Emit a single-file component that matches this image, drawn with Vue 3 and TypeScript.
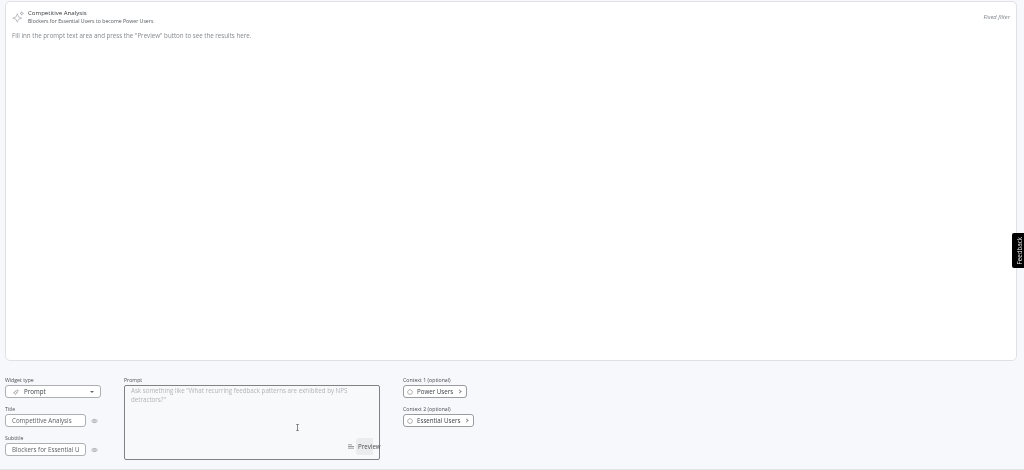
<script setup lang="ts">
const title = 'Competitive Analysis'
const subtitle = 'Blockers for Essential Users to become Power Users'
const contexts = [
  { label: 'Context 1 (optional)', value: 'Power Users' },
  { label: 'Context 2 (optional)', value: 'Essential Users' },
]
</script>

<template>
  <div class="page">
    <section class="card">
      <header class="card-head">
        <svg class="sparkle" viewBox="0 0 16 16" fill="none" stroke="#a0a3a8" stroke-width="0.8">
          <path d="M6.5 4.5 L8 8.5 L12 10 L8 11.5 L6.5 15 L5 11.5 L1 10 L5 8.5 Z" />
          <path d="M12 2 L12.6 3.6 L14.2 4.2 L12.6 4.8 L12 6.4 L11.4 4.8 L9.8 4.2 L11.4 3.6 Z" />
        </svg>
        <div class="head-text">
          <div class="card-title">{{ title }}</div>
          <div class="card-subtitle">{{ subtitle }}</div>
        </div>
        <span class="fixed-filter">Fixed filter</span>
      </header>
      <p class="hint">Fill inn the prompt text area and press the "Preview" button to see the results here.</p>
    </section>

    <section class="editor">
      <div class="col-left">
        <div class="field">
          <label>Widget type</label>
          <div class="select">
            <svg class="tiny" viewBox="0 0 16 16" fill="none" stroke="#777" stroke-width="1.2">
              <path d="M6.5 4.5 L8 8.5 L12 10 L8 11.5 L6.5 15 L5 11.5 L1 10 L5 8.5 Z" />
              <path d="M12 2 L12.6 3.6 L14.2 4.2 L12.6 4.8 L12 6.4 L11.4 4.8 L9.8 4.2 L11.4 3.6 Z" />
            </svg>
            <span class="select-text">Prompt</span>
            <span class="caret"></span>
          </div>
        </div>
        <div class="field">
          <label>Title</label>
          <div class="input-row">
            <div class="input"><span>{{ title }}</span></div>
            <svg class="eye" viewBox="0 0 16 12" fill="none" stroke="#777" stroke-width="1.1">
              <path d="M1 6 C4 1 12 1 15 6 C12 11 4 11 1 6 Z" />
              <circle cx="8" cy="6" r="2.2" />
            </svg>
          </div>
        </div>
        <div class="field">
          <label>Subtitle</label>
          <div class="input-row">
            <div class="input"><span>{{ subtitle }}</span></div>
            <svg class="eye" viewBox="0 0 16 12" fill="none" stroke="#777" stroke-width="1.1">
              <path d="M1 6 C4 1 12 1 15 6 C12 11 4 11 1 6 Z" />
              <circle cx="8" cy="6" r="2.2" />
            </svg>
          </div>
        </div>
      </div>

      <div class="col-prompt field">
        <label>Prompt</label>
        <div class="textarea">
          <div class="placeholder">Ask something like "What recurring feedback patterns are exhibited by NPS detractors?"</div>
          <div class="preview-row">
            <svg class="lines" viewBox="0 0 6 5" fill="none" stroke="#777" stroke-width="0.7">
              <path d="M0 0.8 H4 M0 2.5 H6 M0 4.2 H6" />
            </svg>
            <span class="preview-btn">Preview</span>
          </div>
        </div>
      </div>

      <div class="col-context">
        <div v-for="c in contexts" :key="c.label" class="field">
          <label>{{ c.label }}</label>
          <button class="context-btn">
            <svg class="tiny" viewBox="0 0 12 12" fill="none" stroke="#666" stroke-width="1">
              <path d="M3.5 2 Q6 0.8 8.5 2 L10.5 4.5 V7.5 Q10 10 8 10.5 H4 Q2 10 1.5 7.5 V4.5 Z" />
            </svg>
            <span>{{ c.value }}</span>
            <span class="chevron"></span>
          </button>
        </div>
      </div>
    </section>

    <div class="feedback"><span>Feedback</span></div>
    <svg class="ibeam" viewBox="0 0 5 8" fill="none" stroke="#555" stroke-width="0.8">
      <path d="M1 0.5 H4 M2.5 0.5 V7.5 M1 7.5 H4" />
    </svg>
  </div>
</template>

<style>
html, body {
  margin: 0;
  background: #f7f8fb;
}
</style>

<style scoped>
.page {
  position: relative;
  width: 1024px;
  height: 470px;
  box-sizing: border-box;
  padding: 1px 7px 0 5px;
  background: #f7f8fb;
  border-bottom: 1px solid #e2e3e6;
  overflow: hidden;
  font-family: "Open Sans", "Noto Sans", sans-serif;
  color: #3c3f44;
  filter: blur(0.4px);
}

.card {
  height: 360px;
  box-sizing: border-box;
  padding: 6px;
  background: #fff;
  border: 1px solid #e0e1e4;
  border-radius: 5px;
}

.card-head {
  display: flex;
  align-items: center;
  gap: 3px;
}

.sparkle {
  width: 13px;
  height: 13px;
}

.head-text {
  flex: 1;
}

.card-title {
  font-size: 6.1px;
  line-height: 9px;
  font-weight: 500;
  color: #33363a;
}

.card-subtitle {
  margin-top: 1px;
  font-size: 5.2px;
  line-height: 7px;
  color: #55585d;
}

.fixed-filter {
  font-size: 5.8px;
  font-style: italic;
  color: #7d8085;
}

.hint {
  margin: 6px 0 0;
  font-size: 6.2px;
  line-height: 9px;
  color: #85888c;
}

.editor {
  display: flex;
  margin-top: 16px;
}

.col-left {
  width: 119px;
  flex-shrink: 0;
  display: flex;
  flex-direction: column;
  gap: 8px;
}

.field label {
  display: block;
  height: 7px;
  margin-bottom: 1px;
  font-size: 5.2px;
  line-height: 7px;
  color: #4b4e53;
}

.select {
  width: 96px;
  height: 13px;
  box-sizing: border-box;
  display: flex;
  align-items: center;
  padding: 0 6px 0 7px;
  background: #fff;
  border: 1px solid #adafb3;
  border-radius: 3px;
  font-size: 6.2px;
}

.select-text {
  flex: 1;
  margin-left: 5px;
}

.caret {
  border: 2px solid transparent;
  border-top: 2px solid #666;
  border-bottom: 0;
}

.tiny {
  width: 6px;
  height: 6px;
  flex-shrink: 0;
}

.input-row {
  display: flex;
  align-items: center;
  gap: 5px;
}

.input {
  width: 81px;
  height: 13px;
  box-sizing: border-box;
  padding: 0 6px;
  background: #fff;
  border: 1px solid #adafb3;
  border-radius: 3px;
  font-size: 6.2px;
  line-height: 11px;
  color: #5e6166;
  white-space: nowrap;
  overflow: hidden;
}

.input span {
  display: block;
  overflow: hidden;
}

.eye {
  width: 7px;
  height: 6px;
}

.col-prompt {
  width: 256px;
  flex-shrink: 0;
}

.textarea {
  height: 75px;
  box-sizing: border-box;
  display: flex;
  flex-direction: column;
  justify-content: space-between;
  padding: 1px 0 0 6px;
  background: #f8f9fb;
  border: 1px solid #808286;
  border-radius: 2px;
}

.placeholder {
  width: 232px;
  font-size: 6.2px;
  line-height: 8.5px;
  color: #b2b4b8;
}

.preview-row {
  display: flex;
  align-items: center;
  justify-content: flex-end;
  gap: 2px;
  margin-bottom: 4px;
}

.lines {
  width: 6px;
  height: 5px;
}

.preview-btn {
  width: 24px;
  height: 17px;
  margin-right: -1px;
  padding-left: 2px;
  box-sizing: border-box;
  background: linear-gradient(to right, #ebecee 17px, transparent 17px);
  border-radius: 3px;
  font-size: 6.2px;
  line-height: 17px;
  color: #4a4d52;
  white-space: nowrap;
}

.col-context {
  margin-left: 23px;
  display: flex;
  flex-direction: column;
  align-items: flex-start;
  gap: 8px;
}

.context-btn {
  height: 13px;
  display: flex;
  align-items: center;
  gap: 4px;
  padding: 0 3px;
  background: #fff;
  border: 1px solid #9a9ca0;
  border-radius: 3px;
  font-family: inherit;
  font-size: 6.2px;
  color: #3c3f44;
}

.chevron {
  width: 2px;
  height: 2px;
  margin: 0 2px 0 1px;
  border-top: 1px solid #888;
  border-right: 1px solid #888;
  transform: rotate(45deg);
}

.feedback {
  position: absolute;
  top: 233px;
  right: 0;
  width: 12px;
  height: 35px;
  box-sizing: border-box;
  padding-left: 2px;
  display: flex;
  align-items: center;
  justify-content: center;
  background: #000;
  border-radius: 2px 0 0 2px;
}

.feedback span {
  writing-mode: vertical-rl;
  transform: rotate(180deg);
  font-size: 6.2px;
  color: #e8e8e8;
}

.ibeam {
  position: absolute;
  left: 295px;
  top: 424px;
  width: 5px;
  height: 7px;
}
</style>
